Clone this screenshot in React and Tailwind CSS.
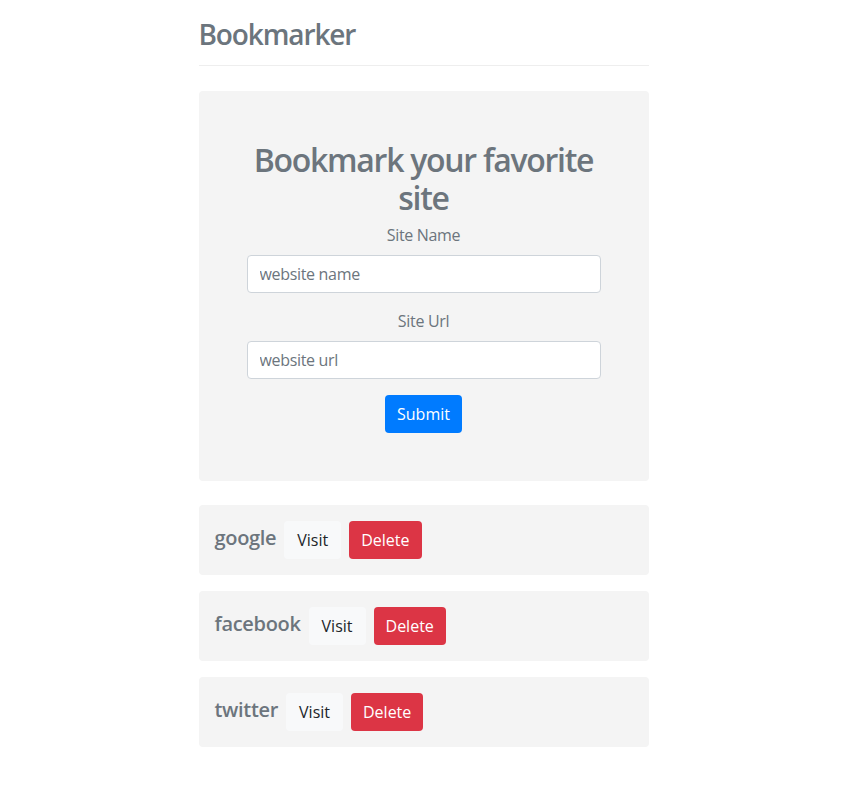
import React from "react";

const sites = ["google", "facebook", "twitter"];

export default function App() {
  return (
    <div className="min-h-screen bg-white text-[#212529] tracking-[-0.02em] [font-family:'Open_Sans',sans-serif]">
      <div className="mx-auto w-[450px]">
        <div className="mb-[25px] border-b border-[#eeeeee] pb-[14px] pt-[17px]">
          <h3 className="text-[28px] font-semibold leading-[34px] tracking-[-0.04em] text-[#6c757d]">Bookmarker</h3>
        </div>

        <div className="mb-[24px] rounded-[4px] bg-[#f4f4f4] p-12 text-center">
          <h2 className="mb-[6px] pt-[2px] text-[32px] font-semibold leading-[38px] tracking-[-0.04em] text-[#6c757d]">
            Bookmark your favorite site
          </h2>
          <form onSubmit={(e) => e.preventDefault()}>
            <div className="mb-4">
              <label className="mb-2 block text-[16px] leading-6 text-[#6c757d]">Site Name</label>
              <input
                type="text"
                placeholder="website name"
                className="block h-[38px] w-full rounded-[4px] border border-[#ced4da] bg-white px-3 text-[16px] tracking-[-0.02em] text-[#495057] placeholder:text-[#6c757d] outline-none"
              />
            </div>
            <div className="mb-4">
              <label className="mb-2 block text-[16px] leading-6 text-[#6c757d]">Site Url</label>
              <input
                type="text"
                placeholder="website url"
                className="block h-[38px] w-full rounded-[4px] border border-[#ced4da] bg-white px-3 text-[16px] tracking-[-0.02em] text-[#495057] placeholder:text-[#6c757d] outline-none"
              />
            </div>
            <button
              type="submit"
              className="h-[38px] rounded-[4px] bg-[#007bff] px-3 text-[16px] leading-6 tracking-normal text-white"
            >
              Submit
            </button>
          </form>
        </div>

        <div className="flex flex-col gap-4">
          {sites.map((s) => (
            <div key={s} className="flex items-center gap-2 rounded-[4px] bg-[#f4f4f4] p-4">
              <h5 className="mb-1 text-[20px] font-semibold leading-6 text-[#6c757d]">{s}</h5>
              <button className="h-[38px] rounded-[4px] bg-[#f8f9fa] px-[13px] text-[16px] tracking-normal text-[#212529]">Visit</button>
              <button className="h-[38px] rounded-[4px] bg-[#dc3545] px-3 text-[16px] tracking-normal text-white">Delete</button>
            </div>
          ))}
        </div>
      </div>
    </div>
  );
}
